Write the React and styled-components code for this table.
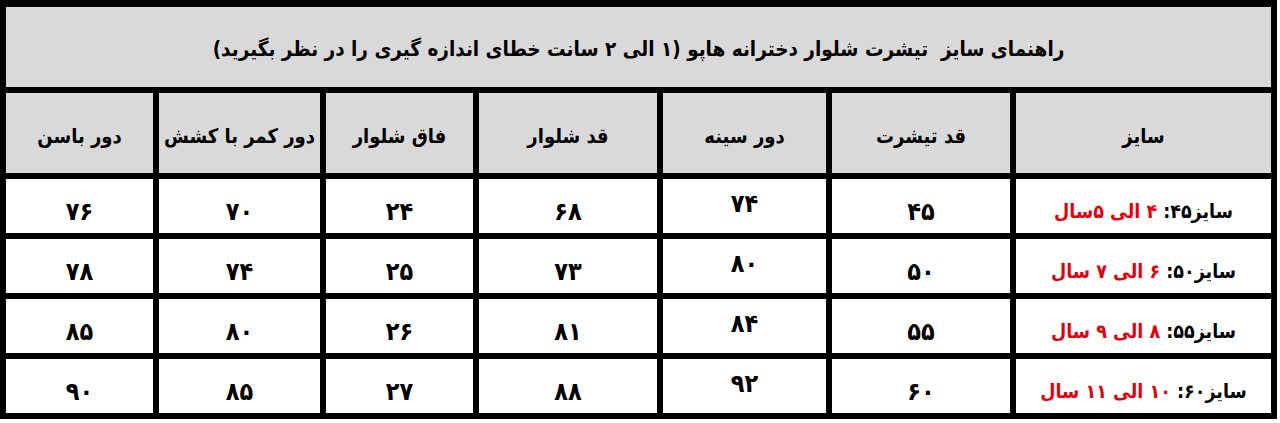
import React from "react";
import styled, { createGlobalStyle } from "styled-components";

const Global = createGlobalStyle`
  html, body { margin: 0; padding: 0; background: #ffffff; }
  body { font-family: "DejaVu Sans Condensed", "DejaVu Sans", sans-serif; }
`;

const Table = styled.div`
  direction: rtl;
  width: 1277px;
  box-sizing: border-box;
  display: grid;
  grid-template-columns: 255px 178px 163px 178px 147px 161px 147px;
  grid-template-rows: 80px 80px repeat(4, 54px);
  gap: 6px;
  padding: 7px 6px 6px 6px;
  background: #000;
`;

const Cell = styled.div`
  display: flex;
  justify-content: center;
  align-items: ${(p) => (p.$top ? "flex-start" : "center")};
  gap: 6px;
  padding-top: ${(p) => p.$pt || 0}px;
  box-sizing: border-box;
  background: ${(p) => (p.$gray ? "#d9d9d9" : "#ffffff")};
  color: #000;
  font-weight: 700;
  font-size: ${(p) => p.$size || 22}px;
  line-height: 1;
  white-space: nowrap;
`;

const Title = styled(Cell)`
  grid-column: 1 / -1;
  font-size: 20.5px;
  padding-top: 4px;
`;

const Label = styled.span`
  unicode-bidi: isolate;
`;

const Red = styled.span`
  unicode-bidi: isolate;
  color: #e4000f;
`;

const headers = ["سایز", "قد تیشرت", "دور سینه", "قد شلوار", "فاق شلوار", "دور کمر با کشش", "دور باسن"];

const rows = [
  { size: "سایز۴۵:", age: "۴ الی ۵سال", v: ["۴۵", "۷۴", "۶۸", "۲۴", "۷۰", "۷۶"] },
  { size: "سایز۵۰:", age: "۶ الی ۷ سال", v: ["۵۰", "۸۰", "۷۳", "۲۵", "۷۴", "۷۸"] },
  { size: "سایز۵۵:", age: "۸ الی ۹ سال", v: ["۵۵", "۸۴", "۸۱", "۲۶", "۸۰", "۸۵"] },
  { size: "سایز۶۰:", age: "۱۰ الی ۱۱ سال", v: ["۶۰", "۹۲", "۸۸", "۲۷", "۸۵", "۹۰"] },
];

export default function App() {
  return (
    <>
      <Global />
      <Table>
        <Title $gray>
          راهنمای سایز&nbsp; تیشرت شلوار دخترانه هاپو (۱ الی ۲ سانت خطای اندازه گیری را در نظر بگیرید)
        </Title>
        {headers.map((h) => (
          <Cell key={h} $gray $size={20} $pt={5}>
            {h}
          </Cell>
        ))}
        {rows.map((r) => (
          <React.Fragment key={r.size}>
            <Cell $pt={12} $size={19.5}>
              <Label>{r.size}</Label>
              <Red>{r.age}</Red>
            </Cell>
            {r.v.map((n, i) =>
              i === 1 ? (
                <Cell key={i} $top $pt={12} $size={25}>
                  {n}
                </Cell>
              ) : (
                <Cell key={i} $pt={10} $size={25}>
                  {n}
                </Cell>
              )
            )}
          </React.Fragment>
        ))}
      </Table>
    </>
  );
}
